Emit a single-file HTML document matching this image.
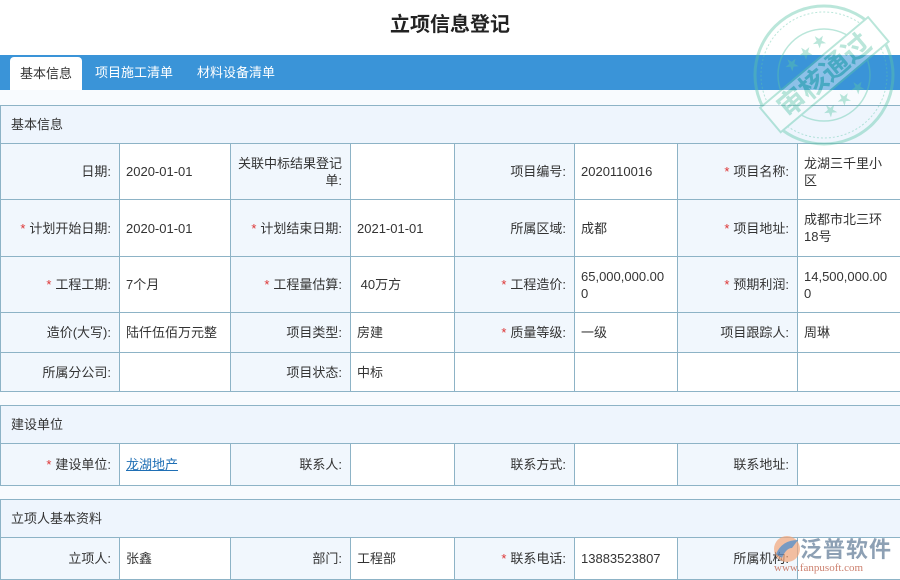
<!DOCTYPE html>
<html><head><meta charset="utf-8"><style>
*{margin:0;padding:0;box-sizing:border-box}
body{width:900px;height:580px;overflow:hidden;background:#f8fbfe;font-family:"Liberation Sans","Noto Sans CJK SC",sans-serif;font-size:13px;color:#333;position:relative}
.title{position:absolute;top:0;left:0;width:900px;height:55px;background:#fff;text-align:center;line-height:50px;font-size:20px;font-weight:bold;color:#222}
.tabs{position:absolute;top:55px;left:0;width:900px;height:35px;background:#3a94d8}
.tab{position:absolute;top:0;height:35px;line-height:35px;color:#fff;font-size:13px}
.tab.on{background:#fff;color:#333;border-radius:4px 4px 0 0;top:2px;height:33px;line-height:33px;padding:0 10px;left:10px}
table{position:absolute;left:0;width:900px;border-collapse:collapse;table-layout:fixed}
td{border:1px solid #8db3c6;background:#fff;padding:0 6px;line-height:17px;vertical-align:middle}
td.l{background:#f1f7fd;text-align:right;padding-right:8px}
td.h{background:#eef5fd;text-align:left;padding-left:10px}
.s{color:#d33;margin-right:4px}
a{color:#1f6fb5;text-decoration:underline}
.stamp{position:absolute;left:752px;top:3px;width:145px;height:145px;opacity:.42}
.logo{position:absolute;left:770px;top:532px;width:130px;height:46px;opacity:.85}
</style></head><body>
<div class="title">立项信息登记</div>
<div class="tabs">
<div class="tab on">基本信息</div>
<div class="tab" style="left:95px">项目施工清单</div>
<div class="tab" style="left:197px">材料设备清单</div>
</div>
<table style="top:105px">
<colgroup><col style="width:119px"><col style="width:111px"><col style="width:120px"><col style="width:104px"><col style="width:120px"><col style="width:103px"><col style="width:120px"><col style="width:103px"></colgroup>
<tr style="height:38px"><td class="h" colspan="8">基本信息</td></tr>
<tr style="height:56px"><td class="l">日期:</td><td>2020-01-01</td><td class="l">关联中标结果登记单:</td><td></td><td class="l">项目编号:</td><td>2020110016</td><td class="l"><span class="s">*</span>项目名称:</td><td>龙湖三千里小区</td></tr>
<tr style="height:57px"><td class="l"><span class="s">*</span>计划开始日期:</td><td>2020-01-01</td><td class="l"><span class="s">*</span>计划结束日期:</td><td>2021-01-01</td><td class="l">所属区域:</td><td>成都</td><td class="l"><span class="s">*</span>项目地址:</td><td>成都市北三环18号</td></tr>
<tr style="height:56px"><td class="l"><span class="s">*</span>工程工期:</td><td>7个月</td><td class="l"><span class="s">*</span>工程量估算:</td><td>&nbsp;40万方</td><td class="l"><span class="s">*</span>工程造价:</td><td style="word-break:break-all">65,000,000.000</td><td class="l"><span class="s">*</span>预期利润:</td><td style="word-break:break-all">14,500,000.000</td></tr>
<tr style="height:40px"><td class="l">造价(大写):</td><td>陆仟伍佰万元整</td><td class="l">项目类型:</td><td>房建</td><td class="l"><span class="s">*</span>质量等级:</td><td>一级</td><td class="l">项目跟踪人:</td><td>周琳</td></tr>
<tr style="height:39px"><td class="l">所属分公司:</td><td></td><td class="l">项目状态:</td><td>中标</td><td></td><td></td><td></td><td></td></tr>
</table>
<table style="top:405px">
<colgroup><col style="width:119px"><col style="width:111px"><col style="width:120px"><col style="width:104px"><col style="width:120px"><col style="width:103px"><col style="width:120px"><col style="width:103px"></colgroup>
<tr style="height:38px"><td class="h" colspan="8">建设单位</td></tr>
<tr style="height:42px"><td class="l"><span class="s">*</span>建设单位:</td><td><a>龙湖地产</a></td><td class="l">联系人:</td><td></td><td class="l">联系方式:</td><td></td><td class="l">联系地址:</td><td></td></tr>
</table>
<table style="top:499px">
<colgroup><col style="width:119px"><col style="width:111px"><col style="width:120px"><col style="width:104px"><col style="width:120px"><col style="width:103px"><col style="width:120px"><col style="width:103px"></colgroup>
<tr style="height:38px"><td class="h" colspan="8">立项人基本资料</td></tr>
<tr style="height:42px"><td class="l">立项人:</td><td>张鑫</td><td class="l">部门:</td><td>工程部</td><td class="l"><span class="s">*</span>联系电话:</td><td>13883523807</td><td class="l">所属机构:</td><td></td></tr>
</table>
<svg class="stamp" viewBox="0 0 145 145">
<circle cx="72" cy="72" r="69" fill="none" stroke="#5cc6a8" stroke-width="3"/>
<circle cx="72" cy="72" r="63" fill="none" stroke="#5cc6a8" stroke-width="1" stroke-dasharray="2 2"/>
<circle cx="72" cy="72" r="46" fill="none" stroke="#5cc6a8" stroke-width="1.5"/>
<g transform="rotate(-40 72 72)">
<rect x="2" y="56" width="141" height="32" fill="#fff" stroke="#5cc6a8" stroke-width="2"/>
<text x="72" y="82" text-anchor="middle" font-size="28" font-weight="bold" fill="#5cc6a8" font-family="Noto Sans CJK SC,sans-serif">审核通过</text>
<text x="72" y="48" text-anchor="middle" font-size="14" fill="#5cc6a8">★ ★ ★</text>
<text x="72" y="108" text-anchor="middle" font-size="14" fill="#5cc6a8">★ ★ ★</text>
</g>
</svg>
<div class="logo">
<svg width="30" height="30" viewBox="0 0 30 30" style="position:absolute;left:2px;top:2px"><circle cx="15" cy="15" r="13" fill="#f2a477" opacity=".8"/><path d="M4 20 Q10 6 26 6 L20 14 Q14 14 10 24Z" fill="#3f7fc2" opacity=".8"/></svg>
<div style="position:absolute;left:30px;top:0;font-size:22px;color:#7a90a8;font-weight:bold;letter-spacing:1px">泛普软件</div>
<div style="position:absolute;left:4px;top:30px;font-size:11px;color:#c46a55;font-family:'Liberation Serif',serif">www.fanpusoft.com</div>
</div>
</body></html>
